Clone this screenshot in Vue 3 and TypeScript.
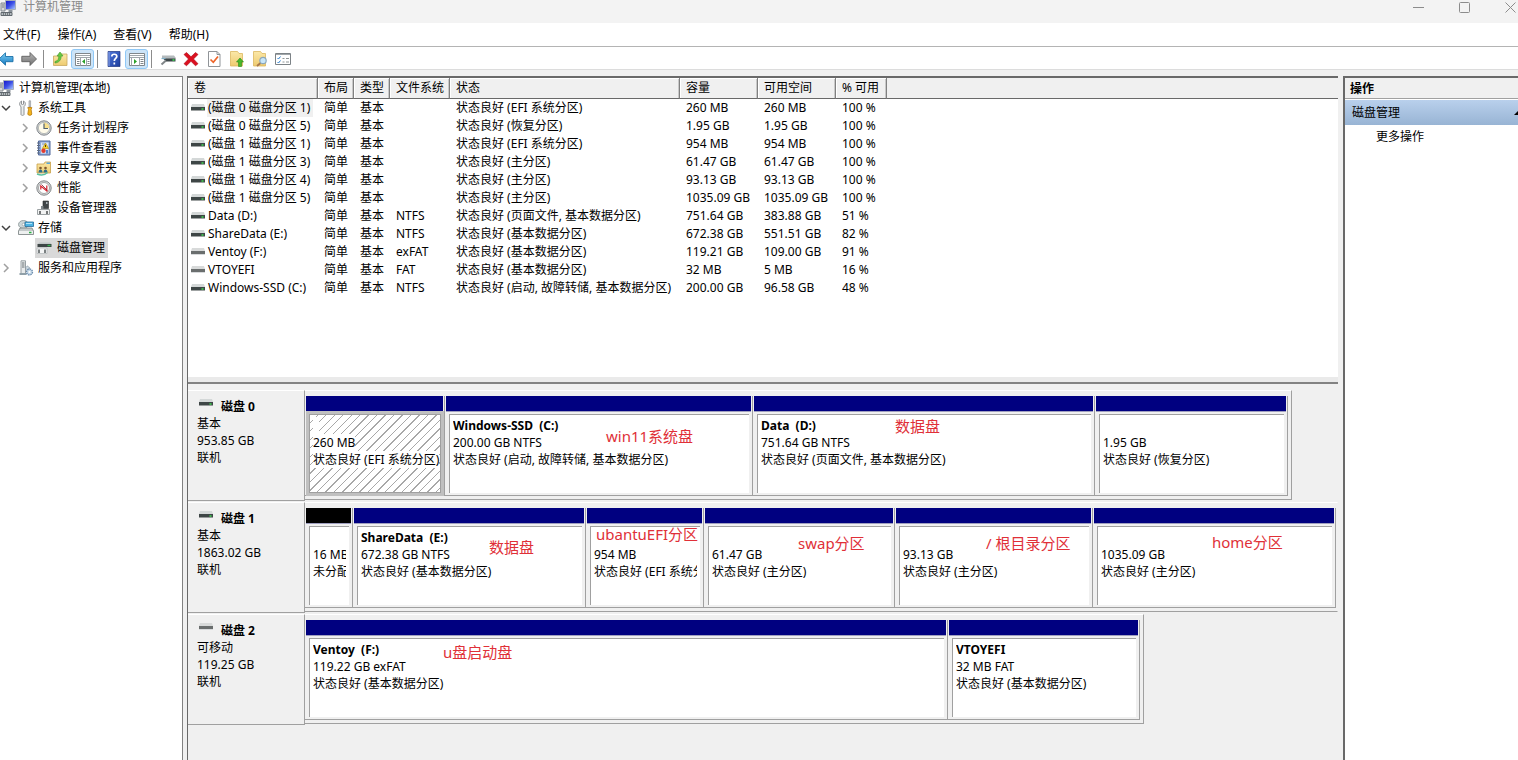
<script setup lang="ts">
interface Volume {
  name: string
  fs: string
  status: string
  size: string
  free: string
  pct: string
  removable?: boolean
}
interface Note {
  text: string
  left: number
  top: number
}
interface Partition {
  name?: string
  size: string
  status: string
  span: number
  selected?: boolean
  unallocated?: boolean
  note?: Note
}
interface Disk {
  name: string
  kind: string
  size: string
  state: string
  removable?: boolean
  span: number
  parts: Partition[]
}

const menus = ['文件(F)', '操作(A)', '查看(V)', '帮助(H)']
const headers = ['卷', '布局', '类型', '文件系统', '状态', '容量', '可用空间', '% 可用']

const volumes: Volume[] = [
  { name: '(磁盘 0 磁盘分区 1)', fs: '', status: '状态良好 (EFI 系统分区)', size: '260 MB', free: '260 MB', pct: '100 %' },
  { name: '(磁盘 0 磁盘分区 5)', fs: '', status: '状态良好 (恢复分区)', size: '1.95 GB', free: '1.95 GB', pct: '100 %' },
  { name: '(磁盘 1 磁盘分区 1)', fs: '', status: '状态良好 (EFI 系统分区)', size: '954 MB', free: '954 MB', pct: '100 %' },
  { name: '(磁盘 1 磁盘分区 3)', fs: '', status: '状态良好 (主分区)', size: '61.47 GB', free: '61.47 GB', pct: '100 %' },
  { name: '(磁盘 1 磁盘分区 4)', fs: '', status: '状态良好 (主分区)', size: '93.13 GB', free: '93.13 GB', pct: '100 %' },
  { name: '(磁盘 1 磁盘分区 5)', fs: '', status: '状态良好 (主分区)', size: '1035.09 GB', free: '1035.09 GB', pct: '100 %' },
  { name: 'Data (D:)', fs: 'NTFS', status: '状态良好 (页面文件, 基本数据分区)', size: '751.64 GB', free: '383.88 GB', pct: '51 %' },
  { name: 'ShareData (E:)', fs: 'NTFS', status: '状态良好 (基本数据分区)', size: '672.38 GB', free: '551.51 GB', pct: '82 %' },
  { name: 'Ventoy (F:)', fs: 'exFAT', status: '状态良好 (基本数据分区)', size: '119.21 GB', free: '109.00 GB', pct: '91 %', removable: true },
  { name: 'VTOYEFI', fs: 'FAT', status: '状态良好 (基本数据分区)', size: '32 MB', free: '5 MB', pct: '16 %', removable: true },
  { name: 'Windows-SSD (C:)', fs: 'NTFS', status: '状态良好 (启动, 故障转储, 基本数据分区)', size: '200.00 GB', free: '96.58 GB', pct: '48 %' },
]

const fullSpan = 1033
const disks: Disk[] = [
  {
    name: '磁盘 0', kind: '基本', size: '953.85 GB', state: '联机', span: 987,
    parts: [
      { size: '260 MB', status: '状态良好 (EFI 系统分区)', span: 140, selected: true },
      { name: 'Windows-SSD  (C:)', size: '200.00 GB NTFS', status: '状态良好 (启动, 故障转储, 基本数据分区)', span: 308, note: { text: 'win11系统盘', left: 161, top: 31 } },
      { name: 'Data  (D:)', size: '751.64 GB NTFS', status: '状态良好 (页面文件, 基本数据分区)', span: 342, note: { text: '数据盘', left: 142, top: 21 } },
      { size: '1.95 GB', status: '状态良好 (恢复分区)', span: 193 },
    ],
  },
  {
    name: '磁盘 1', kind: '基本', size: '1863.02 GB', state: '联机', span: 1033,
    parts: [
      { size: '16 MB', status: '未分配', span: 48, unallocated: true },
      { name: 'ShareData  (E:)', size: '672.38 GB NTFS', status: '状态良好 (基本数据分区)', span: 233, note: { text: '数据盘', left: 136, top: 30 } },
      { size: '954 MB', status: '状态良好 (EFI 系统分区)', span: 118, note: { text: 'ubantuEFI分区', left: 10, top: 17 } },
      { size: '61.47 GB', status: '状态良好 (主分区)', span: 191, note: { text: 'swap分区', left: 94, top: 26 } },
      { size: '93.13 GB', status: '状态良好 (主分区)', span: 198, note: { text: '/ 根目录分区', left: 91, top: 26 } },
      { size: '1035.09 GB', status: '状态良好 (主分区)', span: 243, note: { text: 'home分区', left: 119, top: 25 } },
    ],
  },
  {
    name: '磁盘 2', kind: '可移动', size: '119.25 GB', state: '联机', removable: true, span: 839,
    parts: [
      { name: 'Ventoy  (F:)', size: '119.22 GB exFAT', status: '状态良好 (基本数据分区)', span: 643, note: { text: 'u盘启动盘', left: 138, top: 23 } },
      { name: 'VTOYEFI', size: '32 MB FAT', status: '状态良好 (基本数据分区)', span: 192 },
    ],
  },
]

interface TreeRow {
  label: string
  level: number
  icon: string
  arrow?: 'open' | 'closed'
  selected?: boolean
}
const tree: TreeRow[] = [
  { label: '计算机管理(本地)', level: 0, icon: 'computer' },
  { label: '系统工具', level: 1, icon: 'tools', arrow: 'open' },
  { label: '任务计划程序', level: 2, icon: 'clock', arrow: 'closed' },
  { label: '事件查看器', level: 2, icon: 'events', arrow: 'closed' },
  { label: '共享文件夹', level: 2, icon: 'shared', arrow: 'closed' },
  { label: '性能', level: 2, icon: 'perf', arrow: 'closed' },
  { label: '设备管理器', level: 2, icon: 'device' },
  { label: '存储', level: 1, icon: 'storage', arrow: 'open' },
  { label: '磁盘管理', level: 2, icon: 'diskmgmt', selected: true },
  { label: '服务和应用程序', level: 1, icon: 'services', arrow: 'closed' },
]
</script>

<template>
  <div class="window">
    <svg class="defs" aria-hidden="true">
      <defs>
        <linearGradient id="gBlue" x1="0" y1="0" x2="1" y2="1"><stop offset="0" stop-color="#1414c8" /><stop offset="0.5" stop-color="#3c50e6" /><stop offset="1" stop-color="#b4d2ff" /></linearGradient>
        <linearGradient id="gArrow" x1="0" y1="0" x2="0" y2="1"><stop offset="0" stop-color="#7ed0f4" /><stop offset="1" stop-color="#1478c0" /></linearGradient>
        <linearGradient id="gGrey" x1="0" y1="0" x2="0" y2="1"><stop offset="0" stop-color="#b8b8b8" /><stop offset="1" stop-color="#707070" /></linearGradient>
        <linearGradient id="gFolder" x1="0" y1="0" x2="0" y2="1"><stop offset="0" stop-color="#fbe8a8" /><stop offset="1" stop-color="#eecb70" /></linearGradient>
        <linearGradient id="gHelp" x1="0" y1="0" x2="1" y2="1"><stop offset="0" stop-color="#5078dc" /><stop offset="1" stop-color="#1c3c9c" /></linearGradient>
        <symbol id="i-computer" viewBox="0 0 16 16">
          <path d="M1 3h4v8H1z" fill="#d8d8d8" stroke="#808890" /><path d="M2 5h2M2 7h2" stroke="#707880" />
          <path d="M5.500 .5h10v9h-10z" fill="url(#gBlue)" stroke="#a8b0bc" /><path d="M8.500 10h4v2h-4z" fill="#8c949c" />
          <path d="M1 12.500h11v3H1z" fill="#b4babf" stroke="#60686e" /><path d="M3 14h7" stroke="#303838" stroke-dasharray="1 1" />
        </symbol>
        <symbol id="i-tools" viewBox="0 0 16 16">
          <path d="M3.500 1v3l1 1 1-1V1c1.500.8 2 2 1.800 3.300C7.200 5.500 6.500 6.300 6 6.600v8c0 1-3 1-3 0v-8C2.300 6.200 1.600 5.500 1.600 4.300 1.600 2.800 2.300 1.600 3.500 1z" fill="#eceeee" stroke="#84888c" stroke-width=".9" />
          <path d="M11 .8h1.600V7H11z" fill="#c8ccd0" stroke="#888c90" stroke-width=".6" /><path d="M9.800 7.500h4l-.7 2 .7 4.500c0 1.800-4 1.800-4 0l.7-4.500z" fill="#f4b41c" stroke="#b87808" stroke-width=".8" />
        </symbol>
        <symbol id="i-clock" viewBox="0 0 16 16">
          <circle cx="8" cy="8" r="7.200" fill="#d0d4d6" stroke="#84888c" /><circle cx="8" cy="8" r="5.600" fill="#fffbea" stroke="#a4a8a8" stroke-width=".7" />
          <path d="M8 8V2.600A5.400 5.400 0 0 1 13.400 8z" fill="#f8e08c" /><path d="M8 3.500V8.500h4" fill="none" stroke="#506070" stroke-width="1.200" />
        </symbol>
        <symbol id="i-events" viewBox="0 0 16 16">
          <path d="M2.500 1h11.500v14H2.500z" fill="#8ca8d8" stroke="#50689c" /><path d="M5 2.500h7.500v11H5z" fill="#dce6f4" /><path d="M1 3h3M1 5.500h3M1 8h3M1 10.500h3M1 13h3" stroke="#606c80" />
          <path d="M6 4h3" stroke="#8094b8" /><path d="M9.500 3l3.200 5.500H6.300z" fill="#fad428" stroke="#b08c10" stroke-width=".6" /><path d="M9.500 4.800v2.200" stroke="#503c08" /><circle cx="7.500" cy="10.800" r="2.200" fill="#e03c30" /><path d="M11 10v3.500" stroke="#2860c0" stroke-width="1.500" />
        </symbol>
        <symbol id="i-shared" viewBox="0 0 16 16">
          <path d="M1 4h7l1-2h5.500v11H1z" fill="url(#gFolder)" stroke="#c8a048" stroke-width=".8" /><path d="M10.500 3.200h3.500" stroke="#48a0e0" stroke-width="1.400" />
          <circle cx="4.500" cy="8" r="1.300" fill="#805830" /><circle cx="9.500" cy="8" r="1.300" fill="#805830" /><path d="M2.500 12.500c0-4 4-4 4 0zM7.500 12.500c0-4 4-4 4 0z" fill="#2c6c8c" /><path d="M1 14c4 1.500 8 1 10.500-1.500" stroke="#58c0a0" stroke-width="1.500" fill="none" />
        </symbol>
        <symbol id="i-perf" viewBox="0 0 16 16">
          <circle cx="8" cy="8" r="7.200" fill="#d8dadb" stroke="#84888a" /><circle cx="8" cy="8" r="5.500" fill="#fff" stroke="#909494" stroke-width=".8" /><path d="M4.800 9.500V6l6 5V5.500" fill="none" stroke="#d8202c" stroke-width="1.200" /><path d="M5.500 4.500l6 6" stroke="#801828" stroke-width=".8" />
        </symbol>
        <symbol id="i-device" viewBox="0 0 16 16">
          <path d="M7 1h5.500v7.500H7z" fill="#404648" stroke="#282c2e" stroke-width=".6" /><path d="M10 2h1.500v2H10z" fill="#a8b0b4" /><path d="M5 6h2.500v3H5z" fill="#80888c" />
          <path d="M1.500 9.500h12v5h-12z" fill="#f2f3f3" stroke="#9ca2a4" /><path d="M4 11v3M11 11v3" stroke="#303436" stroke-width="1.300" />
        </symbol>
        <symbol id="i-storage" viewBox="0 0 16 16">
          <ellipse cx="5.500" cy="4.500" rx="5" ry="4" fill="#ccd6d8" stroke="#8a9496" stroke-width=".8" /><circle cx="5.500" cy="4.500" r="1.300" fill="#fff" stroke="#8a9496" stroke-width=".6" />
          <path d="M7 2h8.500v4.500H7z" fill="#4cb4e4" stroke="#286c98" stroke-width=".8" /><path d="M8 3h6v1H8z" fill="#b0e4fa" />
          <path d="M2 8h12l1.500 3v3.500H.5V11z" fill="#c4caca" stroke="#788080" stroke-width=".8" /><path d="M1 11h14v3H1z" fill="#eef0f0" /><path d="M11 12.500h2.500" stroke="#28b040" stroke-width="1.500" />
        </symbol>
        <symbol id="i-diskmgmt" viewBox="0 0 16 16">
          <path d="M1.500 4l2-1.500h10.500l1.500 1.500z" fill="#c0c6c6" /><path d="M1.500 4h14v3h-14z" fill="#3e4646" /><path d="M11.500 5.500h3" stroke="#38b850" stroke-width="1.300" />
          <path d="M1 8h10v5.500H1z" fill="#f4f5f5" stroke="#b0b6b8" stroke-width=".7" /><path d="M3 9.500v3.500M9 9.500v3.500" stroke="#3c4244" stroke-width="1.300" />
        </symbol>
        <symbol id="i-services" viewBox="0 0 16 16">
          <path d="M3 .8h4.500v13H3z" fill="#e8ebec" stroke="#98a0a4" /><path d="M4 3h2.500M4 5h2.500M4 7h2.500" stroke="#687074" /><path d="M1.500 14h7" stroke="#90a0a8" stroke-width="2" />
          <circle cx="9.500" cy="8" r="1.800" fill="#d0dce4" stroke="#8494a0" stroke-dasharray="1.200 .6" /><circle cx="11.500" cy="12" r="3" fill="#c4d8e8" stroke="#6c8cac" stroke-width="1.300" stroke-dasharray="1.500 .8" /><circle cx="11.500" cy="12" r="1.100" fill="#fff" />
        </symbol>
        <symbol id="i-back" viewBox="0 0 16 16"><path d="M1 8l6.500-6.200V5.500H15v5.200H7.500v3.500z" fill="url(#gArrow)" stroke="#1c70a8" stroke-width=".9" /></symbol>
        <symbol id="i-forward" viewBox="0 0 16 16"><path d="M15.500 8L9 1.500v3.800H.8v5.400H9v3.800z" fill="url(#gGrey)" stroke="#606060" stroke-width=".9" /></symbol>
        <symbol id="i-up" viewBox="0 0 16 16"><path d="M1.500 5h6l1.500-2h6v11.500H1.500z" fill="url(#gFolder)" stroke="#c8a860" stroke-width=".8" /><path d="M3 10.500C6 10 6.800 8 6.800 5H5l3-4 3 4H9.200c0 4-2 6.500-6.200 7z" fill="#68c840" stroke="#409830" stroke-width=".6" /></symbol>
        <symbol id="i-treepane" viewBox="0 0 16 16"><path d="M.5 2.500h15v12H.5z" fill="#fff" stroke="#80868a" /><path d="M1 4.500h14M1 6.500h14" stroke="#a0a6aa" /><path d="M5.500 7v7.500M11.500 7v7.500" stroke="#a0a6aa" /><path d="M2 8.500h2.500M2 10.500h2.500M2 12.500h2.500M12.500 8.500h2M12.500 10.500h2M12.500 12.500h2" stroke="#80868a" /><path d="M10 8v5L7 10.500z" fill="#28a028" /></symbol>
        <symbol id="i-actionpane" viewBox="0 0 16 16"><path d="M.5 2.500h15v12H.5z" fill="#fff" stroke="#80868a" /><path d="M1 4.500h14M1 6.500h14" stroke="#a0a6aa" /><path d="M10.500 7v7.500M2.500 7v7.500" stroke="#a0a6aa" /><path d="M11.500 8.500h3M11.500 10.500h3M11.500 12.500h3" stroke="#80868a" /><path d="M5 8v5l3-2.500z" fill="#28a028" /></symbol>
        <symbol id="i-help" viewBox="0 0 16 16"><path d="M2 .5h12v15H2z" fill="url(#gHelp)" stroke="#1c3480" stroke-width=".7" /><path d="M3 1v14" stroke="#90a8e8" /><path d="M5.800 5.500c0-3 5-3 5 0 0 2-2.500 2-2.500 4.500M8.300 11.500v2" fill="none" stroke="#fff" stroke-width="1.700" /></symbol>
        <symbol id="i-disk" viewBox="0 0 16 16"><path d="M2 4.500h12l1.500 2v1.500H2z" fill="#b4babc" /><path d="M3 7.500h12.500v3H6z" fill="#3c4648" /><path d="M12.500 9h2" stroke="#38e050" stroke-width="1.500" /><path d="M6 9.500L1.500 13.500" stroke="#808688" stroke-width="2" /><path d="M1.500 7.500h4" stroke="#80b0c8" stroke-width="1.200" /></symbol>
        <symbol id="i-delete" viewBox="0 0 16 16"><path d="M1 3.500L3.500 1.500 8 5.800 12.500 1.500 15 3.500 10.500 8 15 12.700 12.500 14.800 8 10.300 3.500 14.800 1 12.700 5.500 8z" fill="#dc1020" stroke="#a80814" stroke-width=".6" /></symbol>
        <symbol id="i-check" viewBox="0 0 16 16"><path d="M2.500 .5h8.500l3 3v12H2.500z" fill="#fff" stroke="#909498" /><path d="M11 .5v3h3" fill="none" stroke="#909498" /><path d="M4.500 8.500l2.800 2.800L12 5.500" fill="none" stroke="#ee6428" stroke-width="1.700" /></symbol>
        <symbol id="i-export" viewBox="0 0 16 16"><path d="M1.500 .5h7l1.500 2h3.500V15h-12z" fill="url(#gFolder)" stroke="#dcb860" stroke-width=".8" /><path d="M11 7l3.500 4h-2v4.500h-3V11h-2z" fill="#48b828" stroke="#288818" stroke-width=".6" /></symbol>
        <symbol id="i-find" viewBox="0 0 16 16"><path d="M1.500 .5h7l1.500 2h3.500V15h-12z" fill="url(#gFolder)" stroke="#dcb860" stroke-width=".8" /><path d="M8.500 12L5 15" stroke="#a8784c" stroke-width="1.800" /><circle cx="11" cy="9.500" r="3.200" fill="#c8e6f8" stroke="#8ca8bc" stroke-width="1.200" /></symbol>
        <symbol id="i-list" viewBox="0 0 16 16"><path d="M.5 2.500h15v11H.5z" fill="#fff" stroke="#7c8286" /><path d="M1 3.500h14" stroke="#a0a6aa" /><path d="M2.500 7l1 1 2-2.500M2.500 11l1 1 2-2.500" fill="none" stroke="#2c80d0" /><path d="M7.500 7.500h2M11 7.500h3M7.500 11h2M11 11h3" stroke="#909698" /></symbol>
        <symbol id="i-drive" viewBox="0 0 14 8"><path d="M1 0h12l1 3H0z" fill="#d4d8d8" /><path d="M0 3h14v3.500H0z" fill="#3e4646" /><path d="M10.500 5h2" stroke="#40d850" stroke-width="1.500" /></symbol>
        <symbol id="i-removable" viewBox="0 0 14 8"><path d="M1 0h12l1 3H0z" fill="#d8dada" /><path d="M0 3h14v3H0z" fill="#6a6e6e" /><path d="M0 6.500h14" stroke="#d8dadc" /></symbol>
      </defs>
    </svg>

    <header class="titlebar">
      <svg class="icon"><use href="#i-computer" /></svg>
      <h1>计算机管理</h1>
      <div class="controls">
        <button type="button" aria-label="最小化"><svg viewBox="0 0 11 11"><path d="M0 5.500h11" /></svg></button>
        <button type="button" aria-label="最大化"><svg viewBox="0 0 11 11"><rect x=".5" y=".5" width="10" height="10" rx="1" /></svg></button>
        <button type="button" aria-label="关闭"><svg viewBox="0 0 11 11"><path d="M.5.5l10 10M10.500.5l-10 10" /></svg></button>
      </div>
    </header>

    <nav class="menubar">
      <button v-for="m in menus" :key="m" type="button">{{ m }}</button>
    </nav>

    <div class="toolbar" role="toolbar">
      <button type="button" aria-label="后退"><svg class="icon"><use href="#i-back" /></svg></button>
      <button type="button" aria-label="前进"><svg class="icon"><use href="#i-forward" /></svg></button>
      <i class="sep"></i>
      <button type="button" aria-label="上移"><svg class="icon"><use href="#i-up" /></svg></button>
      <button type="button" class="on" aria-label="显示控制台树"><svg class="icon"><use href="#i-treepane" /></svg></button>
      <i class="sep"></i>
      <button type="button" aria-label="帮助"><svg class="icon"><use href="#i-help" /></svg></button>
      <button type="button" class="on" aria-label="显示操作窗格"><svg class="icon"><use href="#i-actionpane" /></svg></button>
      <i class="sep"></i>
      <button type="button" aria-label="磁盘"><svg class="icon"><use href="#i-disk" /></svg></button>
      <button type="button" aria-label="删除"><svg class="icon"><use href="#i-delete" /></svg></button>
      <button type="button" aria-label="属性"><svg class="icon"><use href="#i-check" /></svg></button>
      <button type="button" aria-label="打开"><svg class="icon"><use href="#i-export" /></svg></button>
      <button type="button" aria-label="浏览"><svg class="icon"><use href="#i-find" /></svg></button>
      <button type="button" aria-label="列表"><svg class="icon"><use href="#i-list" /></svg></button>
    </div>

    <div class="workspace">
      <aside class="tree">
        <ul>
          <li v-for="row in tree" :key="row.label" :class="['level' + row.level, { selected: row.selected }]">
            <button v-if="row.arrow" type="button" class="chevron" :class="row.arrow" :aria-label="'展开或折叠 ' + row.label">
              <svg viewBox="0 0 10 10"><path v-if="row.arrow === 'open'" d="M1 3l4 4 4-4" /><path v-else d="M3 1l4 4-4 4" /></svg>
            </button>
            <span v-else-if="row.level" class="chevron"></span>
            <a href="#"><svg class="icon"><use :href="'#i-' + row.icon" /></svg><span>{{ row.label }}</span></a>
          </li>
        </ul>
      </aside>

      <main class="center">
        <section class="volumes">
          <table>
            <colgroup>
              <col class="c-name" /><col class="c-short" /><col class="c-short" /><col class="c-fs" /><col class="c-status" /><col class="c-size" /><col class="c-size" /><col class="c-pct" /><col />
            </colgroup>
            <thead>
              <tr><th v-for="h in headers" :key="h" scope="col">{{ h }}</th><td></td></tr>
            </thead>
            <tbody>
              <tr v-for="(v, i) in volumes" :key="v.name">
                <td class="name" :class="{ focused: i === 0 }">
                  <div><svg class="drive"><use :href="v.removable ? '#i-removable' : '#i-drive'" /></svg><span>{{ v.name }}</span></div>
                </td>
                <td>简单</td>
                <td>基本</td>
                <td>{{ v.fs }}</td>
                <td>{{ v.status }}</td>
                <td>{{ v.size }}</td>
                <td>{{ v.free }}</td>
                <td>{{ v.pct }}</td>
                <td></td>
              </tr>
            </tbody>
          </table>
        </section>

        <section class="disks">
          <article v-for="d in disks" :key="d.name" class="disk">
            <div class="disk-label">
              <h2><svg class="drive"><use :href="d.removable ? '#i-removable' : '#i-drive'" /></svg>{{ d.name }}</h2>
              <p>{{ d.kind }}</p>
              <p>{{ d.size }}</p>
              <p>{{ d.state }}</p>
            </div>
            <div class="lane">
              <div class="track" :class="{ full: d.span === fullSpan }" :style="{ width: (d.span / fullSpan) * 100 + '%' }">
                <div
                  v-for="(p, i) in d.parts"
                  :key="i"
                  class="part"
                  :class="{ selected: p.selected, unallocated: p.unallocated }"
                  :style="{ flexGrow: p.span - 1 }"
                >
                  <div class="bar"></div>
                  <div class="body">
                    <p class="pname"><span>{{ p.name || '\u00a0\u00a0' }}</span></p>
                    <p><span>{{ p.size }}</span></p>
                    <p><span>{{ p.status }}</span></p>
                  </div>
                  <span v-if="p.note" class="note" :style="{ left: p.note.left + 'px', top: p.note.top + 'px' }">{{ p.note.text }}</span>
                </div>
              </div>
            </div>
          </article>
        </section>
      </main>

      <aside class="actions">
        <h2>操作</h2>
        <button type="button" class="group"><span>磁盘管理</span><svg viewBox="0 0 8 4"><path d="M0 4l4-4 4 4z" /></svg></button>
        <a href="#">更多操作</a>
      </aside>
    </div>
  </div>
</template>

<style>
body {
  margin: 0;
  background: #f0f0f0;
}
</style>

<style scoped>
* {
  box-sizing: border-box;
}
.window {
  display: flex;
  flex-direction: column;
  min-height: 100vh;
  overflow: hidden;
  background: #f0f0f0;
  color: #000;
  font: 12px/18px "Noto Sans", "Noto Sans CJK SC", sans-serif;
  white-space: nowrap;
}
.defs {
  position: absolute;
  width: 0;
  height: 0;
}
h1,
h2,
p,
ul {
  margin: 0;
  padding: 0;
  font-size: 12px;
}
button {
  padding: 0;
  border: 0;
  background: none;
  color: inherit;
  font: inherit;
}
a {
  color: inherit;
  text-decoration: none;
}
.icon {
  flex: none;
  width: 16px;
  height: 16px;
}
.drive {
  flex: none;
  width: 14px;
  height: 8px;
}
.titlebar {
  display: flex;
  height: 23px;
  background: #f3f3f3;
}
.titlebar h1 {
  margin-left: 7px;
  color: #8a8a8a;
  font-weight: 400;
  line-height: 14px;
}
.controls {
  display: flex;
  margin: 0 -15px 0 auto;
}
.controls button {
  display: flex;
  justify-content: center;
  width: 46px;
  padding-top: 2px;
}
.controls svg {
  width: 11px;
  height: 11px;
  fill: none;
  stroke: #8c8c8c;
}
.menubar {
  display: flex;
  gap: 17px;
  height: 24px;
  padding-left: 3px;
  border-bottom: 1px solid #b4b4b4;
  background: #fff;
}
.toolbar {
  display: flex;
  align-items: center;
  height: 23px;
  margin-left: -6px;
  padding-top: 2px;
  border-bottom: 1px solid #dcdcdc;
  background: #fff;
}
.toolbar button {
  display: flex;
  align-items: center;
  justify-content: center;
  width: 23px;
  height: 20px;
}
.toolbar .on {
  border: 1px solid #90c8f6;
  border-radius: 3px;
  background: #cce4f8;
}
.sep {
  width: 2px;
  height: 18px;
  margin: 0 3px;
  border-left: 1px solid #8c8c8c;
}
.workspace {
  display: grid;
  flex: 1;
  grid-template-columns: 183px minmax(0, 1fr) 175px;
  gap: 4px;
  padding-top: 6px;
}
.center {
  display: grid;
  grid-template-rows: minmax(308px, auto) 1fr;
  margin-right: 1px;
  border-left: 1px solid #696969;
}
.tree {
  border-top: 1px solid #828282;
  border-right: 1px solid #828282;
  background: #fff;
}
.tree ul {
  padding-top: 1px;
  list-style: none;
}
.tree li {
  display: flex;
  align-items: center;
  height: 20px;
}
.tree a {
  display: flex;
  align-items: center;
  gap: 5px;
  height: 20px;
  padding: 0 3px 0 1px;
}
.level0 a {
  margin-left: -3px;
}
.tree .level1 {
  padding-left: 1px;
}
.level1 a {
  margin-left: 5px;
  gap: 4px;
}
.level2 {
  padding-left: 20px;
}
.level2 a {
  margin-left: 4px;
}
.selected a {
  background: #d9d9d9;
}
.chevron {
  display: flex;
  width: 11px;
  height: 10px;
}
.chevron svg {
  width: 10px;
  height: 10px;
  fill: none;
  stroke: #a0a0a0;
  stroke-width: 1.5;
}
.chevron.open svg {
  stroke: #404040;
}
.volumes {
  border-top: 2px solid #696969;
  border-bottom: 2px solid #828282;
  background: linear-gradient(#fff, #fff) top / 100% calc(100% - 5px) no-repeat #eaeaea;
}
table {
  width: 100%;
  table-layout: fixed;
  border-collapse: separate;
  border-spacing: 0;
}
.c-name {
  width: 130px;
}
.c-short {
  width: 36px;
}
.c-fs {
  width: 60px;
}
.c-status {
  width: 230px;
}
.c-size {
  width: 78px;
}
.c-pct {
  width: 51px;
}
th,
td {
  height: 18px;
  padding: 0 0 0 6px;
  overflow: hidden;
  font-weight: 400;
  line-height: 18px;
  text-align: left;
}
thead th,
thead td {
  height: 21px;
  border-bottom: 1px solid #696969;
  background: #f0f0f0;
}
thead th {
  border-right: 1px solid #808080;
  box-shadow: inset 1px 1px #fff, inset -1px 0 #c8c8c8;
}
td.name {
  padding-left: 3px;
}
.name div {
  display: flex;
  align-items: center;
  gap: 2px;
}
.name span {
  padding: 0 3px 0 1px;
}
.focused span {
  background: #f0f0f0;
}
.disks {
  display: flex;
  flex-direction: column;
  gap: 1px;
  padding-top: 6px;
}
.disk {
  display: flex;
  height: 111px;
}
.disk-label {
  flex: none;
  width: 117px;
  padding: 7px 0 0 9px;
  border-top: 1px solid #fff;
  border-right: 1px solid #a0a0a0;
  border-bottom: 1px solid #a0a0a0;
  line-height: 17px;
}
.disk-label h2 {
  display: flex;
  gap: 8px;
  padding-left: 2px;
  line-height: 17px;
}
.disk-label h2 .drive {
  margin-top: 1px;
}
.lane {
  flex: 1;
  min-width: 0;
}
.track {
  display: flex;
  height: 110px;
  padding: 5px 3px 3px 0;
  border-top: 1px solid #fff;
  border-right: 1px solid #a0a0a0;
  border-bottom: 1px solid #a0a0a0;
}
.track.full {
  padding-right: 1px;
  border-right-color: transparent;
}
.part {
  position: relative;
  flex: 1 1 0;
  min-width: 0;
  border-right: 1px solid #a0a0a0;
  border-bottom: 1px solid #a0a0a0;
}
.bar {
  height: 16px;
  margin: 0 1px 0 1px;
  border-bottom: 1px solid #a0a0c0;
  background: #000080;
}
.unallocated .bar {
  background: #000;
}
.body {
  height: 79px;
  margin: 2px 3px 0 4px;
  padding: 2px 3px 0 3px;
  overflow: hidden;
  border-top: 1px solid #a0a0a0;
  border-left: 1px solid #a0a0a0;
  background: #fff;
  line-height: 17px;
}
.body p {
  height: 17px;
  overflow: hidden;
}
.pname {
  font-weight: 700;
  white-space: pre;
}
.part.selected .body {
  padding-right: 0;
  border-right: 1px solid #a0a0a0;
  border-bottom: 1px solid #a0a0a0;
  outline: 3px solid #c0c0c0;
  background: repeating-linear-gradient(135deg, #fff 0 5px, #a8a8a8 5px 6px);
}
.part.selected .body span {
  display: inline-block;
  background: #fff;
}
.note {
  position: absolute;
  color: #e03038;
  font-size: 15px;
  line-height: 18px;
}
.actions {
  display: flex;
  flex-direction: column;
  border-top: 2px solid #696969;
  border-left: 2px solid #696969;
  background: #fff;
}
.actions h2 {
  height: 21px;
  padding-left: 5px;
  border-bottom: 1px solid #a0a0a0;
  background: #f0f0f0;
  line-height: 21px;
}
.group {
  display: flex;
  align-items: center;
  justify-content: space-between;
  height: 25px;
  margin-top: 1px;
  padding-left: 7px;
  background: linear-gradient(#b9d0ec, #98b4d4);
}
.group svg {
  width: 8px;
  height: 4px;
  margin-right: -4px;
}
.actions a {
  padding: 3px 0 0 31px;
}
</style>
